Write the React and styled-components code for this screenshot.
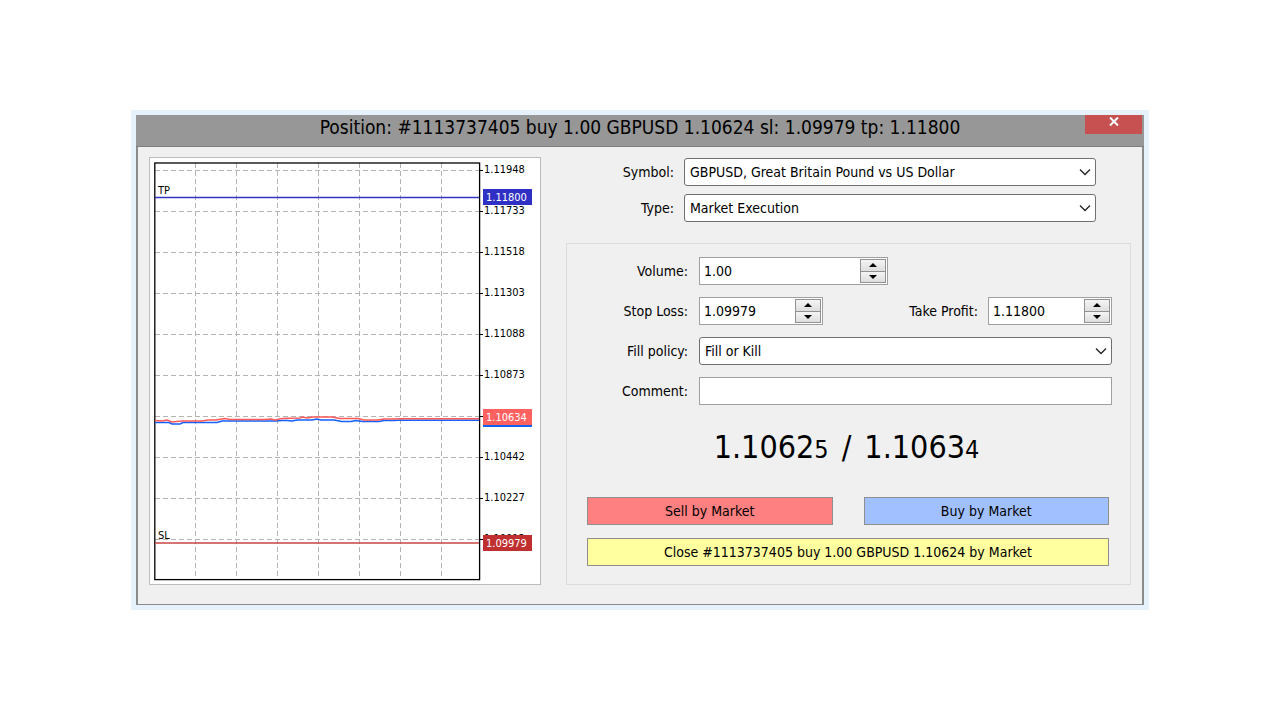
import React from 'react'
import styled, { createGlobalStyle } from 'styled-components'

const gridX = [0, 1, 2, 3, 4, 5, 6].map((i) => 45.5 + i * 41)
const levels = [
  '1.11948',
  '1.11733',
  '1.11518',
  '1.11303',
  '1.11088',
  '1.10873',
  '1.10658',
  '1.10442',
  '1.10227',
  '1.10012',
].map((price, i) => ({ price, y: 12.5 + i * 41 }))

function PriceTag({ y, color, price }) {
  return (
    <g>
      <rect x="333" y={y - 8} width="49" height="16" fill={color} />
      <text x="336" y={y + 4} fill="#fff">{price}</text>
    </g>
  )
}

function TickChart() {
  return (
    <ChartPanel>
      <Plot viewBox="0 0 390 426" role="img" aria-label="GBPUSD tick chart">
        <g stroke="#b4b4b4" strokeDasharray="5 3">
          {gridX.map((x) => <line key={x} x1={x} x2={x} y1="5" y2="418" />)}
          {levels.map(({ y }) => <line key={y} x1="5" x2="329" y1={y} y2={y} />)}
        </g>
        <rect x="4.8" y="5" width="324.8" height="416.6" fill="none" stroke="#000" strokeWidth="1.3" />
        {levels.map(({ price, y }) => (
          <g key={price}>
            <line x1="329" x2="333" y1={y} y2={y} stroke="#000" />
            <text x="334" y={y + 2.5}>{price}</text>
          </g>
        ))}
        <line x1="5" x2="329" y1="39.5" y2="39.5" stroke="#3434c4" strokeWidth="1.3" />
        <line x1="5" x2="329" y1="385" y2="385" stroke="#c84444" strokeWidth="1.4" />
        <text x="8" y="36">TP</text>
        <text x="8" y="381">SL</text>
        <g fill="none" strokeWidth="1.5">
          <path
            stroke="#1460f8"
            d="M5 264.5H19L22 266H30L33 264.5H67L72 263H126L132 262.500H137L142 263L147 262H162L167 261L171 262H184L192 263.5H201L206 262.5L212 263.5H229L234 262.5H244L248 262.200H329"
          />
          <path
            stroke="#fc5858"
            d="M5 262.500L12 263L17 262L22 264L32 263H52L58 262H66L75 260.500L80 261.500H115L121 261L125 262L132 260.500L150 260L153 259L157 260L163 259H182L190 260.500H208L214 262H228L234 261H242L250 260.800H329"
          />
        </g>
        <rect x="333" y="266" width="49" height="3" fill="#1460f0" />
        <PriceTag y={39} color="#3030c4" price="1.11800" />
        <PriceTag y={259} color="#ff6060" price="1.10634" />
        <PriceTag y={385} color="#c03030" price="1.09979" />
      </Plot>
    </ChartPanel>
  )
}

function ComboBox({ id, value }) {
  return (
    <Combo>
      <select id={id} defaultValue={value}>
        <option>{value}</option>
      </select>
      <svg width="12" height="8" viewBox="0 0 12 8" fill="none" stroke="#222" strokeWidth="1.3">
        <path d="M1 1.500L6 6.500L11 1.500" />
      </svg>
    </Combo>
  )
}

function SpinBox({ id, value, wide, name }) {
  return (
    <Spin $wide={wide}>
      <input id={id} type="text" defaultValue={value} />
      <Arrows>
        <button type="button" aria-label={'Increase ' + name}>
          <svg width="8" height="4" viewBox="0 0 8 4"><path d="M0 4L4 0L8 4Z" /></svg>
        </button>
        <button type="button" aria-label={'Decrease ' + name}>
          <svg width="8" height="4" viewBox="0 0 8 4"><path d="M0 0L4 4L8 0Z" /></svg>
        </button>
      </Arrows>
    </Spin>
  )
}

function App() {
  return (
    <Page>
      <GlobalStyle />
      <Dialog>
        <TitleBar>
          <Title>Position: #1113737405 buy 1.00 GBPUSD 1.10624 sl: 1.09979 tp: 1.11800</Title>
          <CloseButton type="button" aria-label="Close">
            <svg width="10" height="9" viewBox="0 0 10 9" stroke="#fff" strokeWidth="2">
              <path d="M1 .5L9 8.500M9 .5L1 8.500" />
            </svg>
          </CloseButton>
        </TitleBar>
        <Body>
          <TickChart />
          <Form onSubmit={(e) => e.preventDefault()}>
            <SymbolFields>
              <Label htmlFor="symbol">Symbol:</Label>
              <ComboBox id="symbol" value="GBPUSD, Great Britain Pound vs US Dollar" />
              <Label htmlFor="type">Type:</Label>
              <ComboBox id="type" value="Market Execution" />
            </SymbolFields>
            <OrderGroup>
              <OrderFields>
                <Label htmlFor="volume">Volume:</Label>
                <SpinBox id="volume" name="volume" value="1.00" wide />
                <Label htmlFor="sl">Stop Loss:</Label>
                <Stops>
                  <SpinBox id="sl" name="stop loss" value="1.09979" />
                  <TakeProfit>
                    <Label htmlFor="tp">Take Profit:</Label>
                    <SpinBox id="tp" name="take profit" value="1.11800" />
                  </TakeProfit>
                </Stops>
                <Label htmlFor="fill">Fill policy:</Label>
                <ComboBox id="fill" value="Fill or Kill" />
                <Label htmlFor="comment">Comment:</Label>
                <CommentInput id="comment" type="text" />
              </OrderFields>
              <Quote>
                <span>1.1062<small>5</small></span>
                <span>/</span>
                <span>1.1063<small>4</small></span>
              </Quote>
              <Actions>
                <ActionButton type="button" $color="#ff8080">Sell by Market</ActionButton>
                <ActionButton type="button" $color="#a0c0ff">Buy by Market</ActionButton>
                <CloseByMarket type="button" $color="#ffffa0">
                  Close #1113737405 buy 1.00 GBPUSD 1.10624 by Market
                </CloseByMarket>
              </Actions>
            </OrderGroup>
          </Form>
        </Body>
      </Dialog>
    </Page>
  )
}

export default App

const GlobalStyle = createGlobalStyle`
  * {
    box-sizing: border-box;
  }
  body {
    margin: 0;
    background: #fff;
  }
  body, input, select, button {
    font-family: Tahoma, "DejaVu Sans Condensed", "DejaVu Sans", sans-serif;
    font-size: 14px;
    color: #000;
  }
`
const Page = styled.main`
  min-height: 100vh;
  padding: 24px 131px;
  display: flex;
  align-items: center;
`
const Dialog = styled.section`
  flex: 1;
  border: 5px solid #e6f1fb;
`
const TitleBar = styled.header`
  height: 32px;
  display: grid;
  grid-template-columns: 57px 1fr 57px;
  padding: 0 2px;
  background: #979797;
  border-bottom: 1px solid #7d7d7d;
`
const Title = styled.h1`
  grid-column: 2;
  margin: 0;
  font-size: 19px;
  font-weight: normal;
  line-height: 24px;
  text-align: center;
  white-space: nowrap;
`
const CloseButton = styled.button`
  height: 19px;
  padding: 0 0 7px;
  display: flex;
  align-items: center;
  justify-content: center;
  border: none;
  background: #c75050;
`
const Body = styled.div`
  display: grid;
  grid-template-columns: 392px 1fr;
  gap: 25px;
  padding: 10px 11px 19px;
  background: #f0f0f0;
  border: solid #8a8c8c;
  border-width: 0 2px 1px;
`
const ChartPanel = styled.div`
  background: #fff;
  border: 1px solid #bcbcbc;
`
const Plot = styled.svg`
  display: block;
  width: 100%;

  text {
    font-size: 11px;
  }
`
const Form = styled.form`
  display: flex;
  flex-direction: column;
  gap: 21px;
`
const SymbolFields = styled.div`
  display: grid;
  grid-template-columns: 108px 1fr;
  gap: 8px 10px;
  padding: 1px 35px 0 0;
`
const Label = styled.label`
  align-self: center;
  text-align: right;
  white-space: nowrap;
`
const Combo = styled.div`
  display: grid;
  height: 28px;
  align-items: center;

  select {
    grid-area: 1 / 1;
    width: 100%;
    height: 28px;
    padding: 0 24px 0 5px;
    appearance: none;
    background: #fff;
    border: 1px solid #707070;
    border-radius: 3px;
  }
  svg {
    grid-area: 1 / 1;
    justify-self: end;
    margin-right: 5px;
    pointer-events: none;
  }
`
const OrderGroup = styled.div`
  flex: 1;
  display: flex;
  flex-direction: column;
  padding: 13px 18px 18px 0;
  border: 1px solid #dcdcdc;
`
const OrderFields = styled.div`
  display: grid;
  grid-template-columns: 121px 1fr;
  gap: 12px 11px;
`
const Spin = styled.div`
  display: flex;
  width: ${(p) => (p.$wide ? '189px' : '124px')};
  height: 28px;
  padding: 1px;
  background: #fff;
  border: 1px solid #a0a0a0;

  input {
    flex: 1;
    min-width: 0;
    padding: 0 3px;
    border: none;
    background: none;
  }
`
const Arrows = styled.div`
  display: flex;
  flex-direction: column;
  width: 26px;

  button {
    flex: 1;
    display: flex;
    align-items: center;
    justify-content: center;
    padding: 0;
    background: linear-gradient(#f4f4f4, #dedede);
    border: 1px solid #929292;
  }
  button + button {
    border-top: none;
  }
`
const Stops = styled.div`
  display: flex;
  justify-content: space-between;
`
const TakeProfit = styled.div`
  display: flex;
  gap: 10px;
`
const CommentInput = styled.input`
  width: 100%;
  height: 28px;
  padding: 0 3px;
  background: #fff;
  border: 1px solid #a0a0a0;
`
const Quote = styled.div`
  flex: 1;
  display: flex;
  justify-content: center;
  gap: 13px;
  padding-left: 14px;
  font-size: 32px;
  line-height: 85px;
  white-space: nowrap;

  small {
    font-size: 25px;
  }
`
const Actions = styled.div`
  display: grid;
  grid-template-columns: 1fr 1fr;
  gap: 13px 31px;
  padding: 0 3px 0 20px;
`
const ActionButton = styled.button`
  height: 28px;
  padding: 0;
  background: ${(p) => p.$color};
  border: 1px solid #8f8f8f;
`
const CloseByMarket = styled(ActionButton)`
  grid-column: 1 / -1;
`
